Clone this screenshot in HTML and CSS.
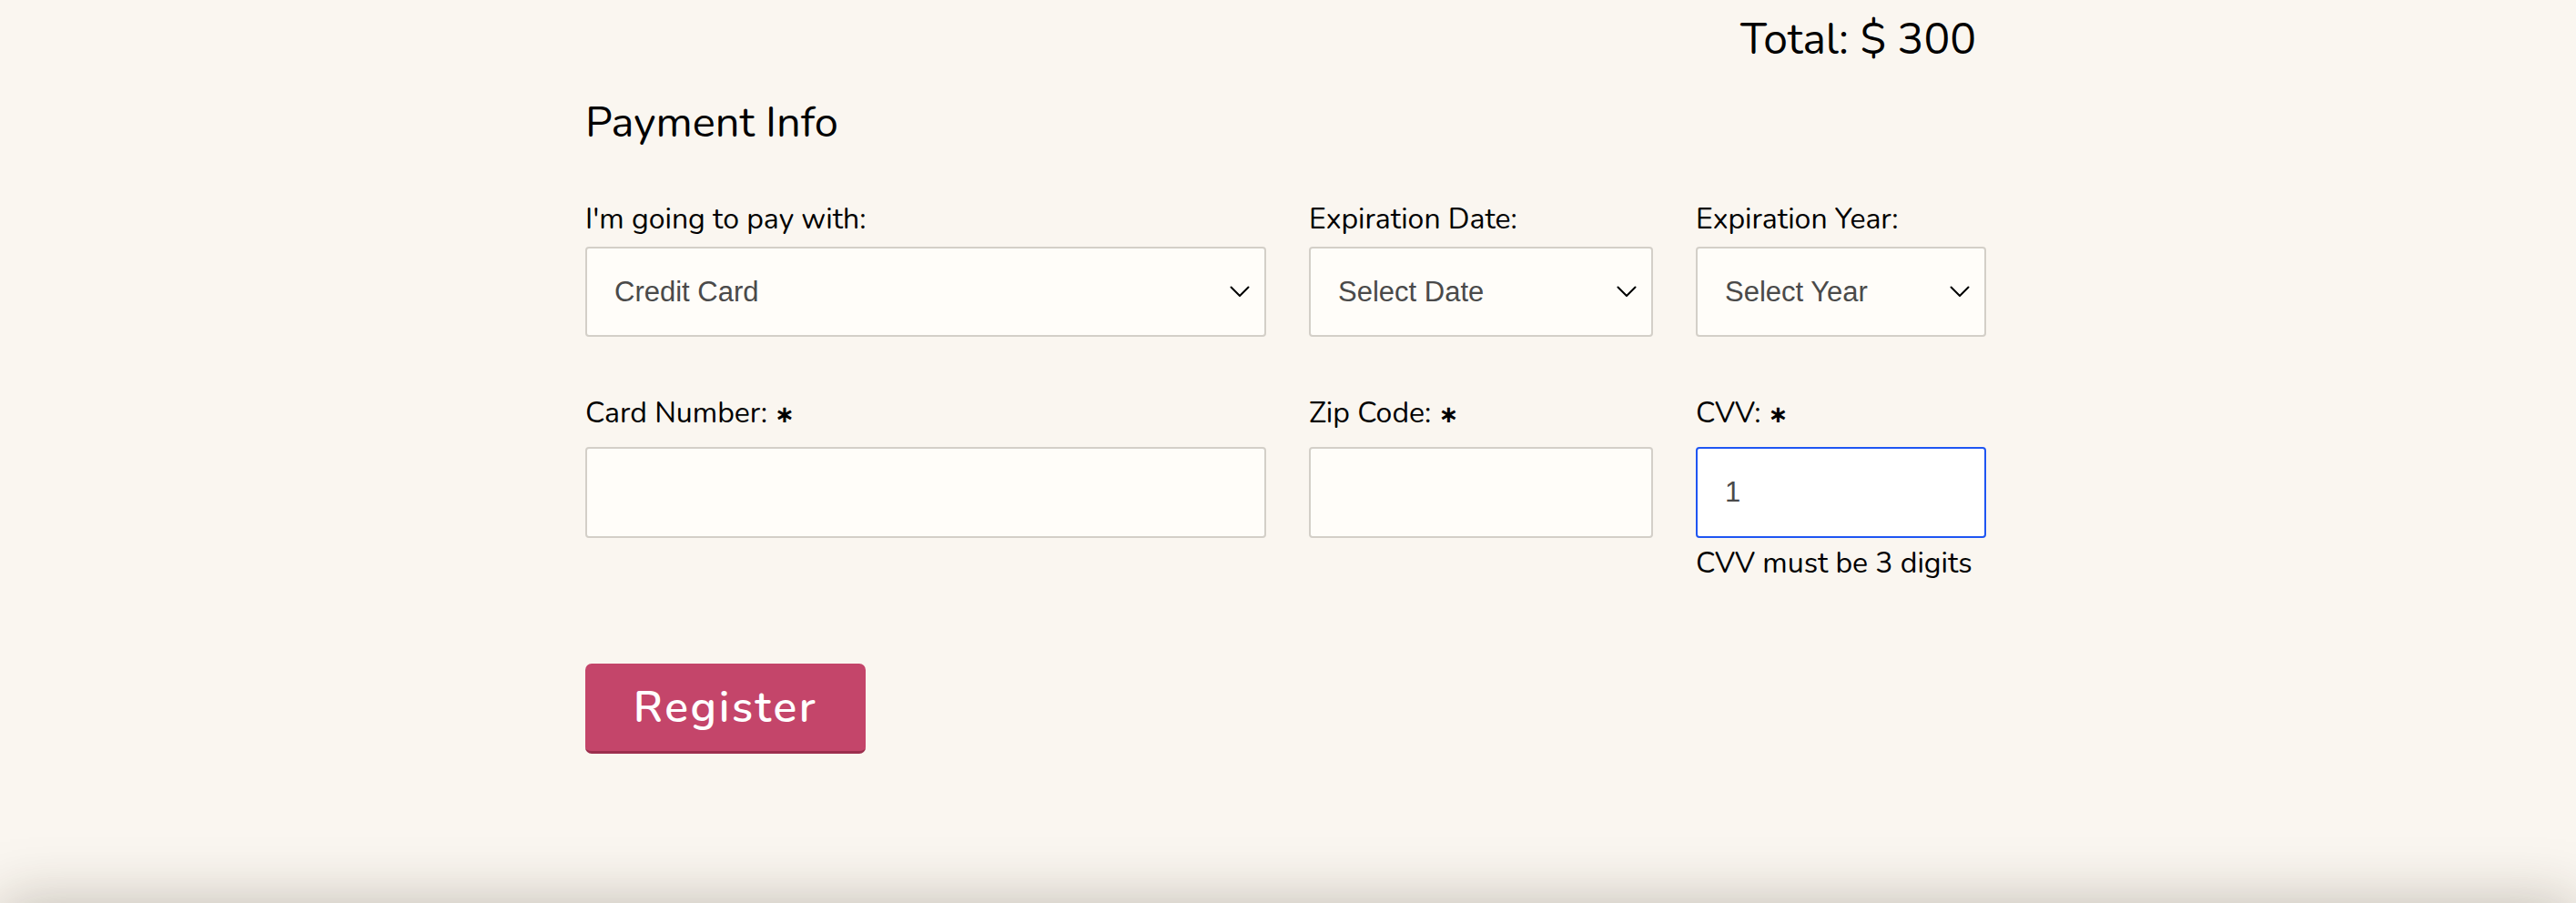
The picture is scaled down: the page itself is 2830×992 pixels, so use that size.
FILE: index.html
```html
<!DOCTYPE html>
<html lang="en">
<head>
<meta charset="utf-8">
<title>Payment Info</title>
<link rel="stylesheet" href="styles.css">
</head>
<body>
<div class="page">
  <div class="container">
    <div class="total">Total: $ 300</div>
    <h2 class="title">Payment Info</h2>
    <div class="grid">
      <div class="field">
        <label class="label">I'm going to pay with:</label>
        <select class="control select">
          <option>Credit Card</option>
          <option>PayPal</option>
          <option>Bitcoin</option>
        </select>
      </div>
      <div class="field">
        <label class="label">Expiration Date:</label>
        <select class="control select">
          <option>Select Date</option>
        </select>
      </div>
      <div class="field">
        <label class="label">Expiration Year:</label>
        <select class="control select">
          <option>Select Year</option>
        </select>
      </div>
      <div class="field row2">
        <label class="label">Card Number: <span class="req">&#8727;</span></label>
        <input class="control input" type="text">
      </div>
      <div class="field row2">
        <label class="label">Zip Code: <span class="req">&#8727;</span></label>
        <input class="control input" type="text">
      </div>
      <div class="field row2">
        <label class="label">CVV: <span class="req">&#8727;</span></label>
        <input class="control input focus" type="text" value="1">
        <div class="error">CVV must be 3 digits</div>
      </div>
    </div>
    <button class="register" type="button">Register</button>
  </div>
</div>
<footer class="foot"></footer>
</body>
</html>
```

FILE: styles.css
```css
html, body {
  margin: 0;
  padding: 0;
  background: #faf6f0;
}

body {
  font-family: "Nunito", "Open Sans", sans-serif;
  color: #000;
  overflow: hidden;
}

.page {
  height: 992px;
  box-sizing: border-box;
  padding-top: 13px;
}

.container {
  width: 1544px;
  margin: 0 auto;
}

.total {
  font-size: 48px;
  line-height: 60px;
  text-align: right;
  padding-right: 16px;
}

.title {
  margin: 34px 0 0 0;
  font-size: 47px;
  line-height: 56px;
  font-weight: 400;
}

.grid {
  margin-top: 60px;
  display: grid;
  grid-template-columns: 748px 378px 319px;
  column-gap: 47px;
  row-gap: 66px;
  align-items: start;
}

.field {
  display: flex;
  flex-direction: column;
}

.label {
  font-size: 32px;
  line-height: 36px;
  margin-bottom: 12px;
}

.row2 .label {
  margin-bottom: 18px;
}

.req {
  font-family: "DejaVu Sans", sans-serif;
  font-size: 26px;
  font-weight: 700;
}

.control {
  box-sizing: border-box;
  height: 99px;
  width: 100%;
  margin: 0;
  border: 2px solid #d3cfc8;
  border-radius: 4px;
  background-color: #fffdf9;
  font-family: "Liberation Sans", Arial, sans-serif;
  font-size: 31px;
  color: #4a4a4a;
  padding: 0 0 0 30px;
  outline: none;
}

.select {
  -webkit-appearance: none;
  appearance: none;
  background-image: url("data:image/svg+xml;utf8,<svg xmlns='http://www.w3.org/2000/svg' width='22' height='13' viewBox='0 0 22 13'><path d='M1.5 1.5 L11 11 L20.5 1.5' fill='none' stroke='black' stroke-width='2' stroke-linecap='round' stroke-linejoin='round'/></svg>");
  background-repeat: no-repeat;
  background-position: right 16px center;
  background-size: 22px 13px;
}

.input {
  height: 100px;
}

.input.focus {
  border-color: #1f56f2;
  background-color: #ffffff;
  padding-left: 30px;
}

.error {
  font-size: 32px;
  line-height: 36px;
  margin-top: 10px;
}

.register {
  display: block;
  margin-top: 92px;
  width: 308px;
  height: 99px;
  box-sizing: border-box;
  padding: 0;
  border: none;
  border-bottom: 3px solid #9c2f4e;
  border-radius: 7px;
  background: #c4456a;
  color: #fff;
  font-family: "Nunito", "Open Sans", sans-serif;
  font-size: 48px;
  font-weight: 600;
  letter-spacing: 2.6px;
}

.foot {
  height: 200px;
  background: #faf6f0;
  box-shadow: 0 0 64px rgba(40, 30, 10, 0.27);
}
```
